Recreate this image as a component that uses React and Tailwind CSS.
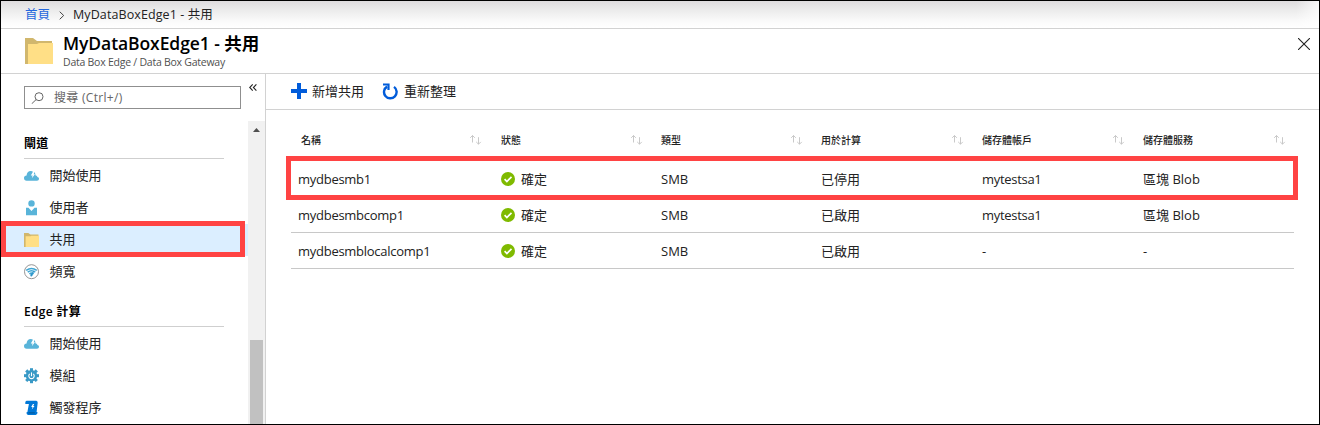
import React from "react";

function Folder({ className }) {
  return (
    <svg className={className} viewBox="0 0 28 26" preserveAspectRatio="none">
      <path d="M0 0h8l4 3h15v6H0zM0 3h6v23H0z" fill="#d1b76d" />
      <path d="M3 6h9l2-1h14v21H3z" fill="#ffdf86" />
    </svg>
  );
}

function CloudBolt() {
  return (
    <svg className="h-4 w-4" viewBox="0 0 16 16">
      <path
        d="M3 12.700A2.800 2.800 0 0 1 0 10C0 8.500 1 7.500 2.600 7.400C2.600 5 4.400 3 6.700 3c1 0 1.800.4 2.500.9l1.500-.4.9 4c1.300-.1 1.800.9 1.700 1.600 1 .1 1.700.8 1.700 1.700 0 1.200-.8 1.900-2 1.900z"
        fill="#59b4d9"
      />
      <path d="M9.400 3L6.800 7.500h1.800l-.8 2.800 3.200-4H9.600L11.300 3z" fill="#fff" />
    </svg>
  );
}

function Person() {
  return (
    <svg className="h-4 w-4" viewBox="0 0 16 16">
      <circle cx="7.500" cy="3.400" r="3.200" fill="#59b4d9" />
      <path d="M2 7.700h2.500l3 3.200 3-3.200H13V15.300H2z" fill="#59b4d9" />
    </svg>
  );
}

function Bandwidth() {
  return (
    <svg className="h-4 w-4" viewBox="0 0 16 16" fill="none">
      <circle cx="7.500" cy="7.700" r="7" fill="#fff" stroke="#7a7a7a" strokeWidth="0.8" />
      <path d="M2.200 6.300q5.300-3.800 10.600 0M3.700 8.100q3.800-2.700 7.600 0M5.400 9.800q2.100-1.500 4.200 0" stroke="#3fa6d3" strokeWidth="1.500" />
      <path d="M6.200 10.800L10.500 6l-2 5.600q-.8 1.400-1.900.6z" fill="#2a94c8" />
    </svg>
  );
}

function Gear() {
  return (
    <svg className="h-4 w-4" viewBox="0 0 16 16">
      <g fill="#3999c6" transform="translate(7.500 7.700)">
        <circle r="5.700" />
        <rect x="-1.500" y="-7.500" width="3" height="15" />
        <rect x="-1.500" y="-7.500" width="3" height="15" transform="rotate(45)" />
        <rect x="-1.500" y="-7.500" width="3" height="15" transform="rotate(90)" />
        <rect x="-1.500" y="-7.500" width="3" height="15" transform="rotate(135)" />
      </g>
      <path d="M5.700 5.900a2.700 2.700 0 1 0 3.600 0" stroke="#fff" strokeWidth="1.100" fill="none" />
      <path d="M7.500 4.400v3.800" stroke="#fff" strokeWidth="1.100" />
    </svg>
  );
}

function Trigger() {
  return (
    <svg className="h-4 w-4" viewBox="0 0 16 16">
      <path d="M2.500.8h9.800q1.600.4 1.400 2L12.600 12h.9q.2 2.400-1.800 2.900H4Q2.200 14.600 2.500 12.300L3.400 12 4.900 4H1.300Q.8 1.400 2.500.8z" fill="#0078d7" />
      <path d="M4.500 12.300h6.300q-.3 .9.400 1.300H4.200z" fill="#005ba1" />
      <path d="M8.900 3.900L7.200 7.100h1.400l-.8 2.400 2.700-3.500H9.200l1-2.100z" fill="#fff" />
    </svg>
  );
}

function SortArrows() {
  return (
    <svg className="h-3 w-3 shrink-0" viewBox="0 0 12 12" fill="none" stroke="#c3c3c3" strokeWidth="0.900">
      <path d="M2.500 8.500V1.500M.2 3.800L2.500 1.500l2.300 2.300M8.500 3.200v7M6.200 7.900l2.300 2.300 2.300-2.300" />
    </svg>
  );
}

function StatusOk() {
  return (
    <svg className="h-[14px] w-[14px]" viewBox="0 0 14 14">
      <circle cx="7" cy="7" r="7" fill="#7fba00" />
      <path d="M3.600 7.100l2.300 2.400 4.600-4.700" stroke="#fff" strokeWidth="1.700" fill="none" />
    </svg>
  );
}

const sections = [
  {
    title: "閘道",
    items: [
      { label: "開始使用", icon: <CloudBolt /> },
      { label: "使用者", icon: <Person /> },
      { label: "共用", icon: <Folder className="h-[14px] w-[15px]" />, selected: true },
      { label: "頻寬", icon: <Bandwidth /> },
    ],
  },
  {
    title: "Edge 計算",
    items: [
      { label: "開始使用", icon: <CloudBolt /> },
      { label: "模組", icon: <Gear /> },
      { label: "觸發程序", icon: <Trigger /> },
    ],
  },
];

const columns = ["名稱", "狀態", "類型", "用於計算", "儲存體帳戶", "儲存體服務"];

const rows = [
  ["mydbesmb1", "確定", "SMB", "已停用", "mytestsa1", "區塊 Blob"],
  ["mydbesmbcomp1", "確定", "SMB", "已啟用", "mytestsa1", "區塊 Blob"],
  ["mydbesmblocalcomp1", "確定", "SMB", "已啟用", "-", "-"],
];

function Section({ title, items }) {
  return (
    <section>
      <h2 className="ml-[23px] flex h-[31px] w-[200px] items-center border-b border-[#cfcfcf] pt-[2px] text-[12px] font-semibold tracking-[0.300px] text-black">
        {title}
      </h2>
      <ul className="pt-px">
        {items.map((it) => (
          <li
            key={it.label}
            className={
              it.selected
                ? "relative flex h-8 items-center bg-[#dbeeff] pl-[23px]"
                : "flex h-8 items-center pl-[23px]"
            }
          >
            <span className="flex w-[25.500px] shrink-0">{it.icon}</span>
            <span className="text-[13px] text-[#222]">{it.label}</span>
            {it.selected && (
              <span className="absolute -top-[3px] left-0 h-9 w-[244px] border-[5px] border-[#ff4343]" />
            )}
          </li>
        ))}
      </ul>
    </section>
  );
}

export default function App() {
  return (
    <div className="flex h-[425px] w-[1320px] flex-col overflow-hidden border border-black bg-white font-['Open_Sans','Noto_Sans_CJK_TC',sans-serif] text-[13px] whitespace-nowrap text-[#222]">
      <nav className="flex h-7 shrink-0 items-center border-b border-[#d2d2d2] bg-[linear-gradient(to_right,transparent_1295px,#fff_1325px),linear-gradient(to_bottom,#dedcde,#ececec_35%,#fafafa_75%,#fff)] pt-px pl-6 text-[12.500px]">
        <a className="text-[#2467dd]">首頁</a>
        <svg className="mr-[8px] ml-[9px] h-[9px] w-[6px]" viewBox="0 0 6 9" fill="none" stroke="#444">
          <path d="M.7.7l4 3.800-4 3.800" />
        </svg>
        <span className="tracking-[0.090px]">MyDataBoxEdge1 - 共用</span>
      </nav>

      <header className="flex h-[45px] shrink-0 items-start justify-between border-b border-[#d2d2d2]">
        <div className="flex pl-6">
          <Folder className="mt-[9px] h-[26px] w-7" />
          <div className="pl-[10px]">
            <h1 className="h-[26px] pt-[2px] text-[17.500px] leading-[25px] font-semibold tracking-[-0.080px] text-black">
              MyDataBoxEdge1 - 共用
            </h1>
            <p className="text-[10.500px] leading-[15px] tracking-[-0.240px] text-[#505050]">
              Data Box Edge / Data Box Gateway
            </p>
          </div>
        </div>
        <svg className="mt-[9px] mr-[9px] h-3 w-3" viewBox="0 0 12 12" stroke="#222" strokeWidth="1.100">
          <path d="M0 0l12 12M12 0L0 12" />
        </svg>
      </header>

      <div className="flex min-h-0 flex-1">
        <aside className="flex w-[265px] shrink-0 flex-col border-r border-[#d2d2d2]">
          <div className="flex h-[47px] shrink-0 pt-3 pl-[23px]">
            <div className="flex h-[23px] w-[217px] items-center border border-[#8f8f8f] text-[12px] text-[#666]">
              <svg className="ml-[6px] h-3 w-[13px]" viewBox="0 0 13 12" fill="none" stroke="#666">
                <circle cx="8" cy="4.700" r="4" />
                <path d="M5.200 7.500L.7 11.800" />
              </svg>
              <span className="ml-[10px] pt-px tracking-[0.300px]">搜尋 (Ctrl+/)</span>
            </div>
            <svg className="mt-[-2px] ml-2 h-[7px] w-2" viewBox="0 0 8 7" fill="none" stroke="#222" strokeWidth="1.100">
              <path d="M3.700.4L.7 3.500l3 3.100M7.400.4l-3 3.100 3 3.100" />
            </svg>
          </div>
          <div className="flex min-h-0 flex-1 justify-between">
            <div className="flex w-[247px] flex-col gap-[8px] pt-[7px]">
              {sections.map((s) => (
                <Section key={s.title} {...s} />
              ))}
            </div>
            <div className="flex w-[17px] flex-col items-center justify-between bg-[#f1f1f1]">
              <svg className="mt-[7px] h-1 w-[7px]" viewBox="0 0 7 4">
                <path d="M0 4L3.500 0 7 4z" fill="#505050" />
              </svg>
              <div className="h-[84px] w-[13px] bg-[#c1c1c1]" />
            </div>
          </div>
        </aside>

        <main className="min-w-0 flex-1">
          <div className="flex h-9 items-center border-b border-[#d2d2d2] pl-[25px]">
            <svg className="mb-px h-4 w-4" viewBox="0 0 16 16">
              <path d="M6 0h4v6h6v4h-6v6H6v-6H0V6h6z" fill="#015cda" />
            </svg>
            <span className="ml-[5px] pt-px">新增共用</span>
            <svg className="mb-px ml-[18px] h-[17px] w-4" viewBox="0 0 16 17" fill="none" stroke="#015cda">
              <path d="M11.500 3.300A6.300 6.300 0 1 1 4.600 3" strokeWidth="2.400" transform="translate(.5 .6)" />
              <path d="M1 1.500h5.500v5.500" strokeWidth="2.200" />
            </svg>
            <span className="ml-[6px] pt-px">重新整理</span>
          </div>

          <div className="relative w-[1028px] pl-[25px]">
            <div className="grid h-[51px] grid-cols-[210px_160px_160px_161px_161px_151px] items-center pt-[8px]">
              {columns.map((c, i) => (
                <div
                  key={c}
                  className={
                    i === 0
                      ? "flex items-center justify-between pr-[19px] pl-[10px]"
                      : i === 5
                        ? "flex items-center justify-between pr-[8px]"
                        : "flex items-center justify-between pr-[18px]"
                  }
                >
                  <span className="pt-[2px] text-[10px] font-medium text-[#222]">{c}</span>
                  <SortArrows />
                </div>
              ))}
            </div>
            {rows.map((r) => (
              <div
                key={r[0]}
                className="grid h-9 grid-cols-[210px_160px_160px_161px_161px_151px] items-center border-b border-[#c8c8c8]"
              >
                {r.map((cell, i) => (
                  <div
                    key={i}
                    className={
                      i === 0
                        ? "pt-[2px] pl-[7px] tracking-[-0.270px]"
                        : i === 4
                          ? "pt-[2px] tracking-[-0.300px]"
                          : i === 1
                            ? "flex items-center gap-[6px]"
                            : "pt-[2px]"
                    }
                  >
                    {i === 1 && <StatusOk />}
                    <span className={i === 1 ? "pt-[2px]" : ""}>{cell}</span>
                  </div>
                ))}
              </div>
            ))}
            <div className="absolute top-[46px] left-5 h-11 w-[1012px] border-[5px] border-[#ff4343]" />
          </div>
        </main>
      </div>
    </div>
  );
}
